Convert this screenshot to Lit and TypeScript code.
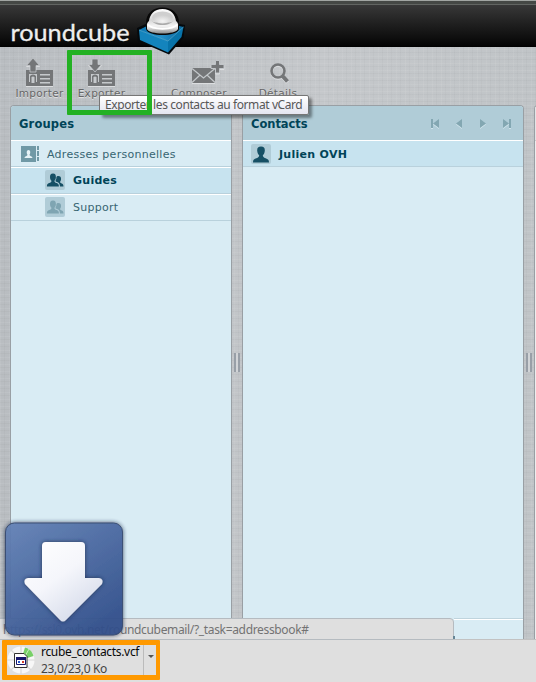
import { LitElement, html, css, svg } from "lit";
import { customElement } from "lit/decorators.js";

const person = svg`<path d="M10 2.500c-3 0-4 1.600-3.800 4.300.2 2 .9 3.600 2 4.500-.1 1.700-.9 2.200-2.800 2.900C2.900 15.100 2 15.800 2 18.500h16c0-2.700-.9-3.400-3.400-4.300-1.900-.7-2.700-1.200-2.800-2.900 1.100-.9 1.800-2.500 2-4.500.2-2.700-.8-4.300-3.800-4.300z"/>`;
const people = svg`<path d="M8 3.500c-2.300 0-3.100 1.500-3 3.700.1 1.700.7 2.900 1.500 3.600-.1 1.500-.9 1.800-2.300 2.300-1.700.6-2.300 1.400-2.300 3.400h12c0-2-.6-2.800-2.300-3.400-1.400-.5-2.100-.8-2.200-2.300.8-.7 1.400-1.900 1.500-3.600.1-2.200-.6-3.700-2.900-3.700z"/><path d="M13.300 6c-1 0-1.600.4-1.900 1.100.1 1.600-.2 2.700-1 3.700.1.700.6 1 1.600 1.300 1.900.7 2.800 1.700 3 4.400h3.500c0-2-.7-2.600-2.200-3.200-.8-.3-1.200-.7-1.200-1.500.6-.6 1-1.500 1-2.700 0-2-.8-3.100-2.800-3.100z"/>`;
const card = svg`<path d="M0 12h27v16H0z"/><path d="M3 16h8v9H3zM14 16h10v1.500H14zm0 4h10v1.500H14zm0 4h10v1.500H14z" fill="#c6c9cc"/><path d="M4.500 25H3v-1h1v-6q1-1.500 3-1.500T10 18v6h1v1H8.500v-6q-1.500-1-3 0v6z"/>`;

@customElement("app-root")
export class AppRoot extends LitElement {
  static styles = css`
    :host { display: block; position: relative; width: 536px; height: 682px; overflow: hidden; font-family: "DejaVu Sans", Verdana, sans-serif; font-size: 11px; color: #376572;
      background-color: #c0c4c8;
      background-image: repeating-linear-gradient(90deg, #ffffff10 0 1px, #0000 1px 4px, #00000005 4px 5px, #0000 5px 9px), repeating-linear-gradient(#ffffff10 0 1px, #0000 1px 3px, #00000006 3px 4px, #0000 4px 7px), linear-gradient(90deg, #b9bdc1, #c5c8cb 60%, #c0c4c7); }
    * { box-sizing: border-box; }
    svg { display: block; overflow: visible; }
    .page { display: flex; flex-direction: column; height: 682px; }
    .top { height: 47px; flex: none; background: linear-gradient(#a1a5a2 0 1px, #454845 1px 4px, #626562 4px 5px, #383838 5px, #202020 50%, #060606 95%, #000); }
    .tools { display: flex; height: 58px; flex: none; padding: 11px 0 0 15px; color: #666; font-size: 10.500px; text-shadow: 0 1px #e0e0e0; }
    .tool { display: flex; flex-direction: column; align-items: center; width: 49px; white-space: nowrap; letter-spacing: .32px; }
    .tool svg { fill: #747678; filter: drop-shadow(0 1px #dcdee0); flex: none; }
    .tool span { line-height: 14px; }
    .tool.export { margin-left: 13px; }
    .tool.compose { margin-left: 43px; width: 60px; }
    .tool.details { margin-left: 30px; width: 38px; }
    .main { display: flex; height: 534px; flex: none; padding-left: 10px; }
    .panel { border: 1px solid #999fa4; border-bottom: 0; border-radius: 4px 4px 0 0; background: #d9ecf4; overflow: hidden; flex: none; }
    .groups { width: 222px; }
    .contacts { width: 282px; }
    .split { width: 10px; flex: none; display: flex; align-items: center; justify-content: center; }
    .grip { width: 6px; height: 19px; margin-top: -19px; border-left: 2px solid #989fa7; border-right: 2px solid #989fa7; background: #d1d4d7; }
    .head { height: 35px; display: flex; align-items: center; justify-content: space-between; padding: 0 12px 0 8px; background: #b0ccd7; border-bottom: 1px solid #fff; color: #004458; font-weight: bold; font-size: 11.500px; }
    .head span { letter-spacing: .15px; padding-top: 1px; }
    .contacts .head span { letter-spacing: -.05px; }
    .pager { fill: #83a7b2; filter: drop-shadow(0 1px #d0e4eb); }
    .row { display: flex; align-items: center; height: 27px; border-bottom: 1px solid #b9d1dc; box-shadow: inset 0 1px #fff; letter-spacing: .28px; padding-top: 1px; }
    .row:nth-child(2) { height: 26px; box-shadow: none; }
    .row.sel { background: #c7e3ef; color: #004458; font-weight: bold; }
    .row svg { margin-left: 34px; margin-right: 8px; flex: none; margin-top: -1px; }
    .row.book svg { margin: 0 6px 0 10px; }
    .row.contact svg { margin: 0 8px 0 8px; }
    .tile { fill: #b0ccd7; }
    .dark { fill: #165065; }
    .pale { fill: #7fa5b2; }
    .preview { width: 20px; background: #eceded; height: 534px; }
    .preview .head { background: #e2e5e6; border-color: #ccc; }
    .bar { flex: 1; border-top: 1px solid #c2c2c2; background: #dfdfdf; display: flex; padding: 5px 0 0 7px; }
    .bar, .status, .tip { font-family: "Noto Sans", "Open Sans", sans-serif; }
    .file { color: #080808; font-size: 12px; line-height: 17px; margin: -2px 0 0 7px; white-space: nowrap; letter-spacing: -.32px; width: 102px; }
    .file div + div { color: #444; }
    .menu { height: 31px; border-left: 1px solid #bbb; padding: 10px 0 0 4px; }
    .over { position: absolute; }
    .logo { left: 0; top: 0; }
    .word { font: 400 24px "Lato", sans-serif; fill: #eee; stroke: #eee; stroke-width: .3; }
    .tip { left: 99px; top: 95px; width: 210px; height: 20px; border: 1px solid #767676; border-radius: 2px; background: linear-gradient(#fff, #e4e5f0); box-shadow: 3px 3px 3px #0006; color: #575757; font-size: 12px; line-height: 18px; padding-left: 5px; white-space: nowrap; letter-spacing: -.41px; }
    .green { left: 67px; top: 50px; width: 85px; height: 65px; border: 5px solid #23b123; border-radius: 1px; }
    .orange { left: 2px; top: 640px; width: 158px; height: 40px; border: 5px solid #ff9900; border-radius: 1px; border-right-width: 4px; }
    .status { left: -1px; top: 618px; width: 455px; height: 22px; border: 1px solid #b5bbc0; border-radius: 0 4px 0 0; background: #dfdfdf; color: #737373; font-size: 12px; line-height: 21px; padding-left: 3px; white-space: nowrap; letter-spacing: -.34px; }
    .edge { left: 454px; top: 618px; width: 69px; height: 2px; border-top: 1px solid #bfd4dd; background: #fff; }
    .dot { left: 453px; top: 636px; width: 2px; height: 3px; background: #668696; }
    .down { left: 0; top: 517px; }
  `;

  render() {
    return html`
      <div class="page">
        <header class="top"></header>
        <nav class="tools">
          <div class="tool"><svg width="28" height="28" viewBox="0 0 28 28">${card}<path d="M7 0l6.500 7.500H10V14H4V7.500H.5z" stroke="#c1c5c9" stroke-width=".8"/></svg><span>Importer</span></div>
          <div class="tool export"><svg width="28" height="28" viewBox="0 0 28 28">${card}<path d="M4 1h6v5.500h3.500L7 14 .5 6.500H4z" stroke="#c1c5c9" stroke-width=".8"/></svg><span>Exporter</span></div>
          <div class="tool compose"><svg width="32" height="28" viewBox="0 0 32 28"><g transform="translate(9 0)"><path d="M0 10h23v15H0z"/><path d="M0 10.500l11.500 9.500L23 10.500M0 24.500l8-7.500m15 7.500L15 17" fill="none" stroke="#c4c8cb" stroke-width="1.200"/><path d="M23.500 2.500h4v4H32v4h-4.500V15h-4v-4.500H19v-4h4.500z" stroke="#c1c5c9"/></g></svg><span>Composer</span></div>
          <div class="tool details"><svg width="28" height="28" viewBox="0 0 28 28"><circle cx="14" cy="13" r="6.500" fill="none" stroke="#747678" stroke-width="2.600"/><path d="M18.500 18l5 5.500" stroke="#747678" stroke-width="4"/></svg><span>Détails</span></div>
        </nav>
        <main class="main">
          <section class="panel groups">
            <div class="head"><span>Groupes</span></div>
            <div class="row book"><svg width="20" height="18" viewBox="0 0 20 18"><path d="M0 1h15v16H0zM16 1h2v4h-2zm0 5h2v5h-2zm0 6h2v4h-2z" fill="#7099a6"/><path d="M7.500 5c-2 0-2.300 3-1 4.700 0 1.500-3 1.300-3 3.300h8c0-2-3-1.800-3-3.300C9.800 8 9.500 5 7.500 5z" fill="#e7f3f7"/></svg>Adresses personnelles</div>
            <div class="row sel"><svg width="20" height="20" viewBox="0 0 20 20"><rect class="tile" width="20" height="20" rx="2"/><g class="dark">${people}</g></svg>Guides</div>
            <div class="row"><svg width="20" height="20" viewBox="0 0 20 20"><rect class="tile" width="20" height="20" rx="2"/><g class="pale">${people}</g></svg>Support</div>
          </section>
          <div class="split"><div class="grip"></div></div>
          <section class="panel contacts">
            <div class="head"><span>Contacts</span><svg class="pager" width="80" height="9" viewBox="0 0 80 9"><path d="M0 0h2v9H0zm8 0v9L2 4.500zM31 0v9l-6-4.500zM49 0v9l6-4.500zM72 0v9l6-4.500zm6 0h2v9h-2z"/></svg></div>
            <div class="row sel contact"><svg width="20" height="20" viewBox="0 0 20 20"><rect class="tile" width="20" height="20" rx="2"/><g class="dark">${person}</g></svg>Julien OVH</div>
          </section>
          <div class="split"><div class="grip"></div></div>
          <section class="panel preview"><div class="head"></div></section>
        </main>
        <footer class="bar">
          <svg width="27" height="30" viewBox="0 0 27 30"><circle cx="14" cy="15" r="13.500" fill="#f7f7f7"/><path d="M14 1v28M0 15h28M4 5l20 20M24 5L4 25" stroke="#d9d9d9" stroke-width="1.200"/><path d="M14 15l4-12.500c4 1 7.500 4 8.500 8.500z" fill="#78d068"/><path d="M17 13l5-9" stroke="#c8edc0"/><path d="M7.500 8.500H17l3 3v11H7.500z" fill="#fff" stroke="#333"/><path d="M9.500 12.500h9v7h-9z" fill="#fff" stroke="#15156a"/><path d="M9 12h10v3H9z" fill="#15156a"/><path d="M11 16h2v2h-2z" fill="#2456ce"/><path d="M15 16h2v2h-2z" fill="#d43c2c"/></svg>
          <div class="file"><div>rcube_contacts.vcf</div><div>23,0/23,0 Ko</div></div>
          <div class="menu"><svg width="6" height="3"><path d="M0 0h6L3 3z" fill="#555"/></svg></div>
        </footer>
      </div>
      <svg class="over logo" width="200" height="60" viewBox="0 0 200 60">
        <defs><linearGradient id="cube" x2="1"><stop stop-color="#0873af"/><stop offset=".5" stop-color="#258fc8"/><stop offset="1" stop-color="#06659b"/></linearGradient><linearGradient id="ball" x2="0" y2="1"><stop stop-color="#fff"/><stop offset=".45" stop-color="#d6d6d6"/><stop offset=".7" stop-color="#f4f4f4"/><stop offset="1" stop-color="#8c8c8c"/></linearGradient><radialGradient id="bowl" cy=".8"><stop stop-color="#f4f4f4"/><stop offset="1" stop-color="#cfcfcf"/></radialGradient></defs>
        <text class="word" x="10.500" y="40.500" textLength="119" lengthAdjust="spacingAndGlyphs">roundcube</text>
        <path d="M137 28l11-5h26l11 2-1.500 13L169 54.500l-31-13.500z" fill="#05090c"/>
        <path d="M139 30l29 11v11.500l-28-12.500z" fill="#1484bd"/><path d="M168 41l15.500-14-2 10L168 52.500z" fill="#0873a9"/><path d="M139 30l10-5h26l8.500 2L168 41z" fill="url(#cube)"/><path d="M139 30l29 11 15.500-14" fill="none" stroke="#59b5dd" stroke-width=".7"/>
        <path d="M146 23c0-9 6-15.500 16.500-15.500S179 14 179 23v6c-2 8-31 8-33 0z" fill="#080808"/>
        <path d="M147 26c-.5-2 .5-4 2-5 1-7 5-12 13.500-12S175 14 176 21c1.500 1 2.500 3 2 5v3c-2 6-29 6-31 0z" fill="url(#ball)"/>
        <path d="M151.500 19c1 8 21 8 22 0-1 5-5 3-11 3s-10 2-11-3z" fill="#aaa"/><ellipse cx="162.500" cy="17.500" rx="10.500" ry="6" fill="url(#bowl)"/>
        <path d="M148 24.500c4 5.500 25 5.500 29 0" fill="none" stroke="#fff" stroke-width="2"/>
      </svg>
      <div class="over tip">Exporter les contacts au format vCard</div>
      <div class="over green"></div>
      <div class="over edge"></div>
      <div class="over status">https://ssl0.ovh.net/roundcubemail/?_task=addressbook#</div>
      <div class="over dot"></div>
      <svg class="over down" width="130" height="125" viewBox="0 0 130 125">
        <defs><linearGradient id="blue" x2=".7" y2="1"><stop stop-color="#6482b6"/><stop offset="1" stop-color="#314f8b"/></linearGradient><linearGradient id="arrow" x2=".7" y2="1"><stop stop-color="#fff"/><stop offset=".5" stop-color="#f5f6fb"/><stop offset="1" stop-color="#d5dbea"/></linearGradient><filter id="soft" x="-.2" y="-.2" width="1.400" height="1.400"><feDropShadow dx="0" dy="0" stdDeviation="2" flood-color="#172747" flood-opacity=".8"/></filter></defs>
        <rect x="5.500" y="6" width="117" height="112" rx="9" fill="url(#blue)" stroke="#34496f" filter="url(#soft)" opacity=".95"/>
        <path d="M46 25h35q4 0 4 4v32h14q5 1 3 6L66 103q-3 3-6 0L25 67q-2-5 3-6h14V29q0-4 4-4z" fill="url(#arrow)" filter="url(#soft)"/>
      </svg>
      <div class="over orange"></div>
    `;
  }
}
